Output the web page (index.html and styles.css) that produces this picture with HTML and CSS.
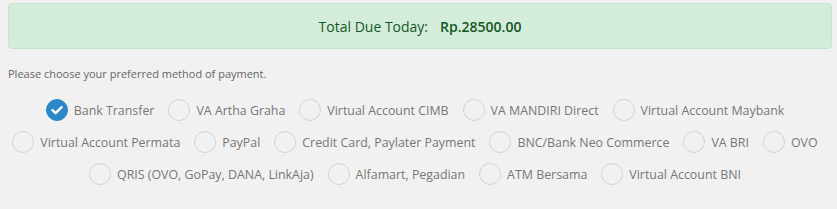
FILE: index.html
```html
<!DOCTYPE html>
<html>
<head>
	<meta charset="utf-8">
	<title>Checkout</title>
	<link rel="stylesheet" href="styles.css">
</head>
<body>

<!-- 결제 금액 -->
<div class="due">
	<span>Total Due Today:</span>
	<b>Rp.28500.00</b>
</div>

<p class="note">Please choose your preferred method of payment.</p>

<!-- 결제 방법 목록 -->
<div class="methods">
	<label class="pick on"><i><svg viewBox="0 0 22 22" width="22" height="22"><path d="M6.5 11.2 L9.6 14.2 L15.6 8.2" fill="none" stroke="#fff" stroke-width="2.4" stroke-linecap="round" stroke-linejoin="round"/></svg></i>Bank Transfer</label>
	<label class="pick"><i></i>VA Artha Graha</label>
	<label class="pick"><i></i>Virtual Account CIMB</label>
	<label class="pick"><i></i>VA MANDIRI Direct</label>
	<label class="pick"><i></i>Virtual Account Maybank</label>
	<label class="pick"><i></i>Virtual Account Permata</label>
	<label class="pick"><i></i>PayPal</label>
	<label class="pick"><i></i>Credit Card, Paylater Payment</label>
	<label class="pick"><i></i>BNC/Bank Neo Commerce</label>
	<label class="pick"><i></i>VA BRI</label>
	<label class="pick"><i></i>OVO</label>
	<label class="pick"><i></i>QRIS (OVO, GoPay, DANA, LinkAja)</label>
	<label class="pick"><i></i>Alfamart, Pegadian</label>
	<label class="pick"><i></i>ATM Bersama</label>
	<label class="pick"><i></i>Virtual Account BNI</label>
</div>

<div class="next">Lanjutkan</div>

</body>
</html>
```

FILE: styles.css
```css
* { margin:0px; padding:0px; box-sizing:border-box; }
body { background:#f1f1f1; font-family:"Open Sans", "Liberation Sans", sans-serif; padding:3px 5px 0px 8px; overflow:hidden; height:209px; }

.due { height:46px; background:#d4edda; border:1px solid #c3e6cb; border-radius:4px; color:#155724; font-size:14px; display:flex; justify-content:center; align-items:center; gap:12px; }
.due b { font-weight:600; }

.note { margin-top:17px; font-size:11px; line-height:16px; color:#666; }

.methods { margin-top:17px; display:flex; flex-wrap:wrap; justify-content:center; row-gap:10px; column-gap:4px; }
.pick { display:flex; align-items:center; gap:6px; height:22px; margin-right:10px; font-size:12.4px; color:#777; cursor:pointer; }
.pick i { display:block; width:22px; height:22px; border:1px solid #d3d3d3; border-radius:50%; }
.pick.on i { background:#2a88c9; border-color:#2a88c9; }
.pick.on i svg { display:block; margin:-1px; }

.next { margin-top:19px; text-align:center; font-size:18px; color:#2a88c9; }
```
